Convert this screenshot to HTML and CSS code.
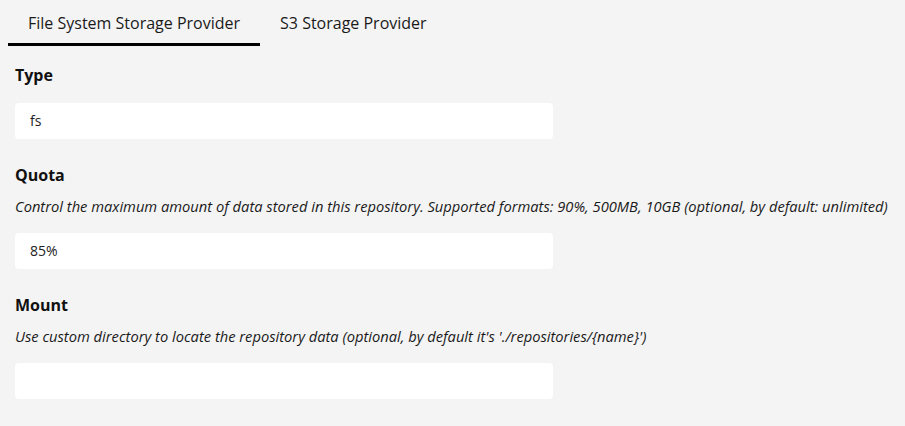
FILE: index.html
```html
<!DOCTYPE html>
<html>
<head>
<meta charset="utf-8">
<link rel="stylesheet" href="styles.css">
</head>
<body>
<div class="page">
  <div class="tabs">
    <div class="tab active">File System Storage Provider</div>
    <div class="tab">S3 Storage Provider</div>
  </div>
  <div class="panel">
    <div class="field">
      <div class="label">Type</div>
      <div class="input">fs</div>
    </div>
    <div class="field">
      <div class="label">Quota</div>
      <div class="desc">Control the maximum amount of data stored in this repository. Supported formats: 90%, 500MB, 10GB (optional, by default: unlimited)</div>
      <div class="input">85%</div>
    </div>
    <div class="field">
      <div class="label">Mount</div>
      <div class="desc">Use custom directory to locate the repository data (optional, by default it's './repositories/{name}')</div>
      <div class="input"></div>
    </div>
  </div>
</div>
</body>
</html>
```
FILE: styles.css
```css
html, body {
  margin: 0;
  padding: 0;
  background: #f4f4f4;
}
body {
  font-family: "Open Sans", "Noto Sans", sans-serif;
  color: #111;
}
.page {
  padding: 0 8px;
}
.tabs {
  display: flex;
}
.tab {
  font-size: 16px;
  line-height: 22px;
  padding: 12px 20px 9px;
  border-bottom: 3px solid transparent;
  color: #1a1a1a;
}
.tab.active {
  border-bottom-color: #000;
}
.panel {
  padding: 0 7px;
}
.field {
  display: flex;
  flex-direction: column;
  align-items: flex-start;
  padding-top: 18px;
}
.field + .field {
  padding-top: 25px;
}
.label {
  font-size: 16px;
  font-weight: 700;
  line-height: 22px;
  margin-bottom: 10px;
  color: #111;
}
.desc {
  font-size: 14.7px;
  font-style: italic;
  line-height: 20px;
  margin-bottom: 10px;
  color: #1a1a1a;
  white-space: nowrap;
}
.input {
  margin-top: 7px;
  width: 538px;
  height: 36px;
  box-sizing: border-box;
  background: #fff;
  border-radius: 4px;
  padding: 0 15px;
  font-size: 14px;
  line-height: 36px;
  color: #222;
}
```
